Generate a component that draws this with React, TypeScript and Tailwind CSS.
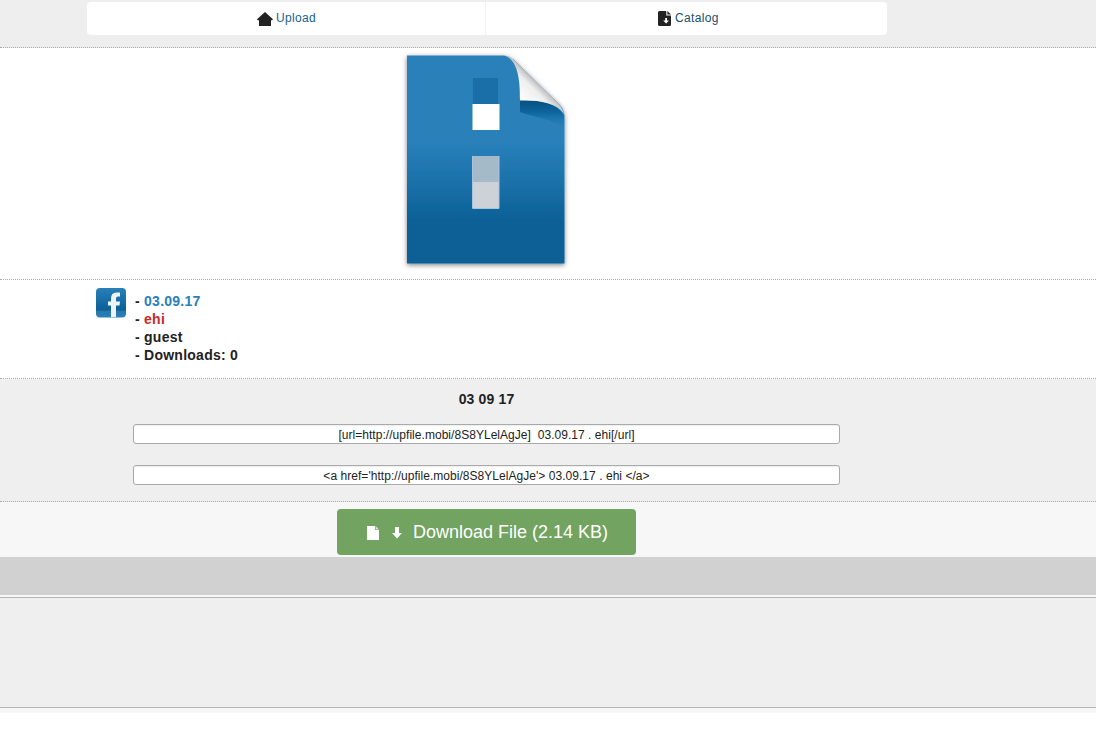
function HomeIcon() {
  return (
    <svg width="16" height="14" viewBox="0 0 16 14" fill="#222" className="block">
      <path d="M8 0 L16 7.2 L15 8.4 L14 8 V14 H2 V8 L1 8.4 L0 7.2 Z" />
    </svg>
  )
}

function CatalogIcon() {
  return (
    <svg width="13" height="15" viewBox="0 0 13 15" className="block">
      <path d="M1.5 0 H8.3 V4.6 H13 V13.5 Q13 15 11.5 15 H1.5 Q0 15 0 13.5 V1.5 Q0 0 1.5 0 Z" fill="#222" />
      <path d="M9.4 0 L13 3.6 H9.4 Z" fill="#222" />
      <path d="M7.2 7 H9 V9.5 H11 L8.1 12.5 L5.2 9.5 H7.2 Z" fill="#fff" />
    </svg>
  )
}

function FileArt() {
  return (
    <svg width="190" height="231" viewBox="390 48 190 231" className="block">
      <defs>
        <linearGradient id="sheet" x1="0" y1="0" x2="0" y2="1">
          <stop offset="0" stopColor="#2980b9" />
          <stop offset="0.42" stopColor="#2980b9" />
          <stop offset="0.6" stopColor="#1c72aa" />
          <stop offset="0.8" stopColor="#096096" />
          <stop offset="1" stopColor="#096096" />
        </linearGradient>
        <linearGradient id="fold" x1="0" y1="1" x2="1" y2="0">
          <stop offset="0.25" stopColor="#fff" />
          <stop offset="0.46" stopColor="#eee" />
          <stop offset="0.55" stopColor="#bbb" />
        </linearGradient>
        <linearGradient id="foldShade" x1="0" y1="0" x2="0" y2="1">
          <stop offset="0" stopColor="#074f80" />
          <stop offset="0.4" stopColor="#0d659d" />
          <stop offset="1" stopColor="#2980b9" stopOpacity="0" />
        </linearGradient>
        <filter id="shadow" x="-10%" y="-10%" width="120%" height="120%">
          <feDropShadow dx="0" dy="1.5" stdDeviation="2.5" floodColor="#000" floodOpacity="0.5" />
        </filter>
      </defs>
      <g filter="url(#shadow)">
        <path d="M407 55.5 H504 Q511 56 517 63 L557 102 Q564 108 564.5 116 V263.5 H407 Z" fill="url(#sheet)" />
      </g>
      <path d="M520 100 C539 100 558 103 564 116 V130 C552 118 536 118 520 112 Z" fill="url(#foldShade)" />
      <path d="M504 55.5 Q511 56 517 63 L557 102 Q562 107 564 114 C556 102 538 100 520 100.5 C520 83 519 60 504 55.5 Z" fill="url(#fold)" />
      <rect x="473" y="78" width="25" height="26" fill="#1a6fa9" />
      <rect x="472.5" y="104" width="27" height="26" fill="#fff" />
      <rect x="473" y="156" width="26" height="26" fill="#a5bac9" />
      <rect x="473" y="182" width="26" height="26" fill="#cdd2d8" />
      <path d="M472.5 208.5 V156 M499 156 V208.5 H472.5" fill="none" stroke="#a9c4d8" />
    </svg>
  )
}

function FacebookIcon() {
  return (
    <svg width="30" height="30" viewBox="0 0 30 30" className="block">
      <defs>
        <linearGradient id="fb" x1="0" y1="0" x2="0" y2="1">
          <stop offset="0" stopColor="#2980b9" />
          <stop offset="0.75" stopColor="#0a5f96" />
          <stop offset="0.78" stopColor="#2877ab" />
          <stop offset="1" stopColor="#2980b9" />
        </linearGradient>
      </defs>
      <rect width="30" height="29.5" rx="4" fill="url(#fb)" />
      <path d="M15 29 V17.5 H12 V13.5 H15 V10.5 Q15 4.5 20.5 4.5 H24 V8.5 H22 Q20 8.5 20 10.5 V13.5 H24 L23.5 17.5 H20 V29 Z" fill="#f1f4f6" />
    </svg>
  )
}

function PageIcon() {
  return (
    <svg width="12" height="14" viewBox="0 0 12 14" className="block">
      <path d="M0 0 H8 V4 H12 V14 H0 Z" fill="#fff" />
      <path d="M8.6 0 L12 3.4 H8.6 Z" fill="#d5e4cf" />
    </svg>
  )
}

function ArrowIcon() {
  return (
    <svg width="10" height="12" viewBox="0 0 10 12" fill="#fff" className="block">
      <path d="M3 0 H7 V6 H10 L5 11.5 L0 6 H3 Z" />
    </svg>
  )
}

function CodeField({ value }: { value: string }) {
  return (
    <input
      readOnly
      value={value}
      className="block h-5 w-[707px] rounded-[3px] border border-[#aaa] bg-white pt-px text-center text-[12px] leading-4 tracking-[0.04px] text-[#222] shadow-[inset_0_1px_1px_#eee] outline-none"
    />
  )
}

export default function App() {
  return (
    <div className="h-[732px] overflow-hidden bg-white font-['Liberation_Sans',Arial,sans-serif] text-[#222]">
      <header className="h-12 border-b border-dotted border-[#aaa] bg-[#eee] pt-[2px]">
        <nav className="ml-[87px] flex h-[33px] w-[800px] rounded-[4px] bg-white text-[12px] leading-4 tracking-[0.33px]">
          <a href="#" className="flex w-[399px] items-center border-r border-[#f3f3f3] pl-[170px] text-[#165f8e]">
            <HomeIcon />
            <span className="ml-[3px] -mt-[2px]">Upload</span>
          </a>
          <a href="#" className="flex items-center pl-[172px] text-[#174f6e]">
            <CatalogIcon />
            <span className="ml-1 -mt-[2px]">Catalog</span>
          </a>
        </nav>
      </header>

      <section className="h-[232px] border-b border-dotted border-[#aaa] pl-[390px]">
        <FileArt />
      </section>

      <section className="flex h-[99px] border-b border-dotted border-[#aaa] pt-2 pl-24">
        <FacebookIcon />
        <ul className="mt-1 ml-[9px] text-[14px] leading-[18px] font-bold tracking-[0.25px]">
          <li>- <span className="text-[#2980b9]">03.09.17</span></li>
          <li>- <span className="text-[#c62828]">ehi</span></li>
          <li>- guest</li>
          <li>- Downloads: 0</li>
        </ul>
      </section>

      <section className="h-[123px] border-b border-dotted border-[#aaa] bg-[#efefef]">
        <div className="flex w-[973px] flex-col items-center pt-[11px]">
          <h1 className="mb-[16px] text-[14px] leading-[18px] font-bold tracking-[0.15px]">03 09 17</h1>
          <CodeField value="[url=http://upfile.mobi/8S8YLelAgJe]  03.09.17 . ehi[/url]" />
          <div className="h-[21px]" />
          <CodeField value="<a href='http://upfile.mobi/8S8YLelAgJe'> 03.09.17 . ehi </a>" />
        </div>
      </section>

      <section className="h-[55px] bg-[#f7f7f7] pt-[7px]">
        <button className="ml-[337px] flex h-[46px] w-[299px] items-center rounded-[4px] bg-[#73a360] pl-[30px] text-[18px] text-white">
          <span className="pt-[2px]">
            <PageIcon />
          </span>
          <span className="ml-[13px] pt-[2px]">
            <ArrowIcon />
          </span>
          <span className="ml-[11px] whitespace-nowrap">Download File (2.14 KB)</span>
        </button>
      </section>

      <div className="h-[38px] bg-[#d1d1d1]" />
      <div className="h-[2px] bg-[#f7f7f7]" />
      <footer className="h-[111px] border-y border-[#b2b6b8] bg-[#efefef]" />
      <div className="h-[5px] bg-[#f7f7f7]" />
    </div>
  )
}
